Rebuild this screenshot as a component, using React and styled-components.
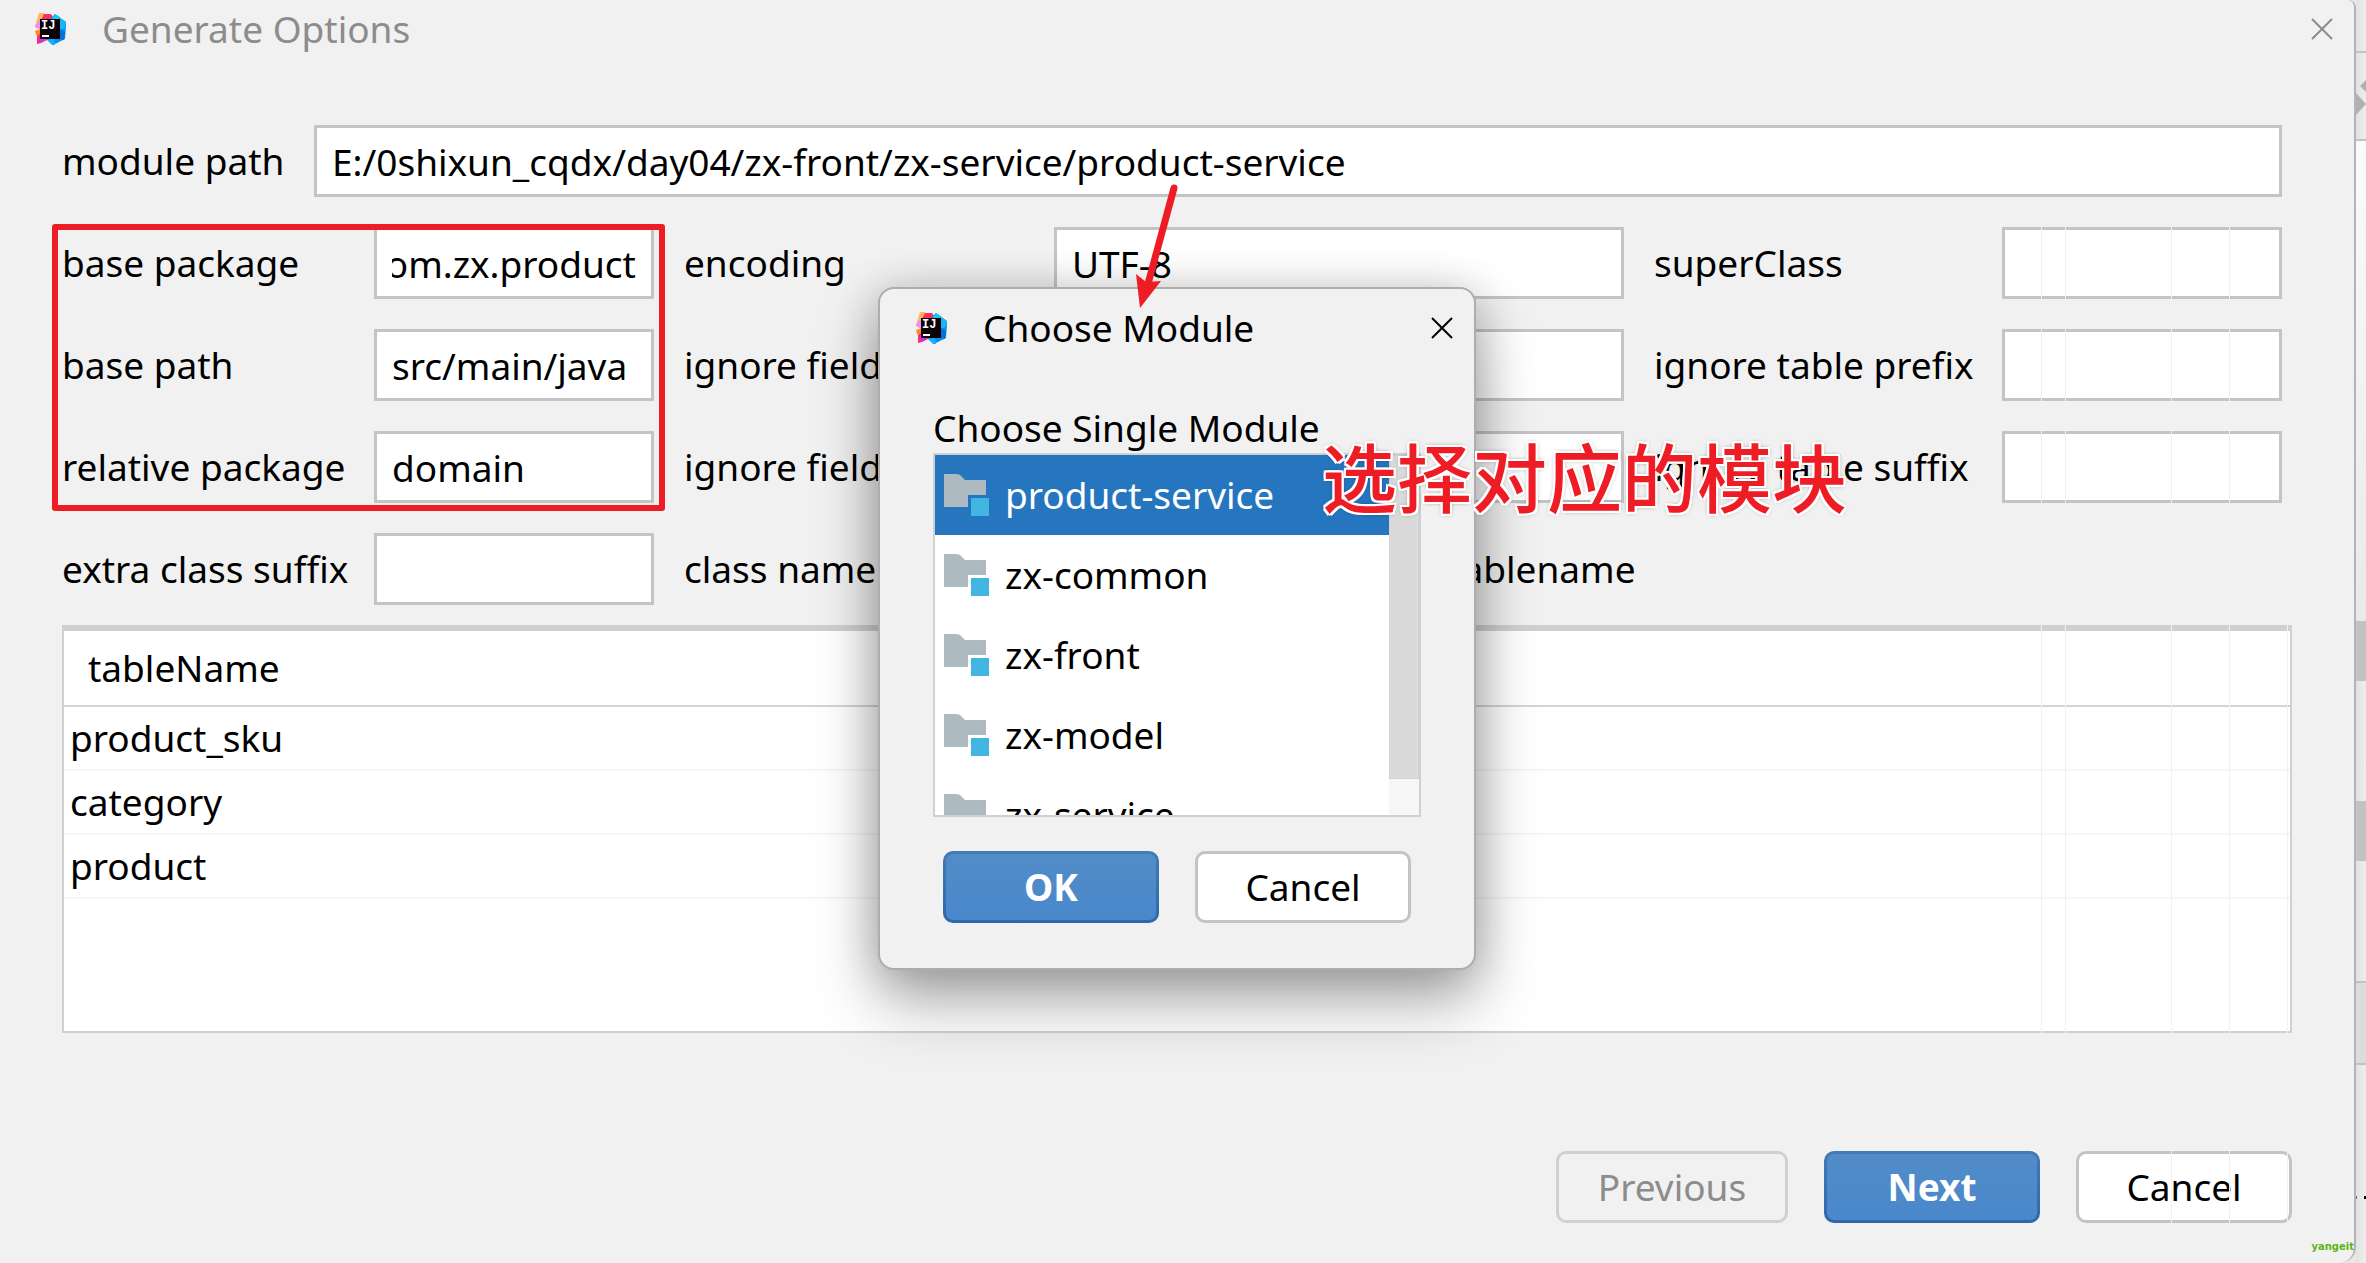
import React, { useEffect, useRef, useState } from 'react';
import styled, { createGlobalStyle, css } from 'styled-components';

const GlobalStyle = createGlobalStyle`
  * {
    box-sizing: border-box;
  }

  body {
    margin: 0;
    background-color: #f1f1f1;
    color: #000;
    font-family: "Noto Sans", "Noto Sans CJK SC", sans-serif;
    font-size: 37px;
    line-height: 50px;
    overflow: hidden;
  }

  button, input {
    font: inherit;
    color: inherit;
  }
`;

const Desktop = styled.div`
  display: flex;
  min-height: 100vh;
  background-color: #e8e8e8;
`;

const Window = styled.main`
  position: relative;
  flex: 1;
  min-width: 0;
  display: flex;
  flex-direction: column;
  background-color: #f1f1f1;
  border-right: 2px solid #b4b4b4;
  border-radius: 0 8px 16px 0;
`;

const TitleBar = styled.header`
  display: flex;
  align-items: center;
  gap: 35px;
  height: ${({ $dialog }) => ($dialog ? '78px' : '58px')};
  padding: 0 20px 0 ${({ $dialog }) => ($dialog ? '36px' : '35px')};
`;

const Title = styled.h1`
  flex: 1;
  margin: 0;
  font-size: 37px;
  font-weight: 400;
  color: ${({ $muted }) => ($muted ? '#8c8c8c' : '#000')};
`;

const CloseButton = styled.button`
  display: flex;
  padding: 0;
  border: none;
  background: none;
  color: ${({ $muted }) => ($muted ? '#8c8c8c' : '#000')};
  cursor: pointer;
`;

const Content = styled.form`
  flex: 1;
  display: flex;
  flex-direction: column;
  padding: 67px 62px 40px 62px;
`;

const PathRow = styled.div`
  display: flex;
  align-items: center;
  margin: 0 10px 30px 0;
`;

const FieldGrid = styled.div`
  position: relative;
  display: grid;
  grid-template-columns: 312px 280fr 400px 570fr 378px 280fr;
  row-gap: 30px;
  align-items: center;
  margin: 0 10px 20px 0;
`;

const PathLabel = styled.label`
  width: 252px;
`;

const FieldLabel = styled.label`
  padding-left: ${({ $inner }) => ($inner ? '30px' : '0')};
  white-space: nowrap;
`;

const TextInput = styled.input`
  width: 100%;
  min-width: 0;
  height: 72px;
  padding: 0 15px;
  border: 3px solid #c4c4c4;
  border-radius: 0;
  background-color: #fff;
  outline: none;
`;

const PathInput = styled(TextInput)`
  flex: 1;
`;

const Strategy = styled.div`
  grid-column: span 2;
  display: flex;
  gap: 40px;
  padding-left: 20px;
  white-space: nowrap;
`;

const RadioLabel = styled.label`
  display: flex;
  align-items: center;
  gap: 12px;

  input {
    width: 28px;
    height: 28px;
    margin: 0;
  }
`;

// red frame drawn over the first three rows of the left pair of columns
const Highlight = styled.div`
  position: absolute;
  grid-area: 1 / 1 / 4 / 3;
  inset: -3px -11px -8px -10px;
  border: 6px solid #ee1c25;
  border-radius: 3px;
  pointer-events: none;
`;

const TablePanel = styled.div`
  flex: 1;
  border: 2px solid #d0d0d0;
  border-top-width: 6px;
  background-color: #fff;
`;

const Table = styled.table`
  width: 100%;
  border-collapse: collapse;

  th {
    height: 75px;
    padding: 0 24px;
    border-bottom: 2px solid #d4d4d4;
    font-weight: 400;
    text-align: left;
  }

  td {
    height: 64px;
    padding: 0 6px;
    border-bottom: 2px solid #f6f6f6;
  }
`;

const Actions = styled.div`
  display: flex;
  justify-content: flex-end;
  gap: 36px;
  margin-top: ${({ $dialog }) => ($dialog ? '34px' : '118px')};
  padding: 0 ${({ $dialog }) => ($dialog ? '10px' : '0')};
`;

const Button = styled.button`
  height: 72px;
  width: ${({ $wide }) => ($wide ? '232px' : '216px')};
  border: 3px solid #c4c4c4;
  border-radius: 10px;
  background-color: #fff;
  cursor: pointer;

  &:disabled {
    border-color: #d0d0d0;
    background-color: transparent;
    color: #8c8c8c;
  }

  ${({ $primary }) =>
    $primary &&
    css`
      border-color: transparent;
      background: linear-gradient(#528cc8, #4988cc) padding-box, linear-gradient(#437bb5, #3067ab) border-box;
      color: #fff;
      font-weight: 700;
    `}
`;

const Seams = styled.div`
  position: absolute;
  top: 227px;
  right: 66px;
  bottom: 40px;
  display: grid;
  grid-template-columns: 24px 106px 58px 58px 1px;
  pointer-events: none;

  i {
    border-left: 1px solid #f1f1f1;
  }
`;

const Overlay = styled.div`
  position: absolute;
  inset: 0;
  display: flex;
  justify-content: center;
  align-items: flex-start;
  padding-top: 287px;
`;

const Dialog = styled.section`
  position: relative;
  width: 598px;
  padding-bottom: 45px;
  border: 2px solid #adadad;
  border-radius: 16px;
  background-color: #f1f1f1;
  background-clip: padding-box;
  box-shadow: 0 32px 64px rgba(0, 0, 0, 0.32), 0 4px 44px rgba(0, 0, 0, 0.2);
`;

const DialogBody = styled.div`
  padding: 36px 53px 0 53px;
`;

const ListTitle = styled.h2`
  margin: 0;
  font-size: 37px;
  font-weight: 400;
`;

const ListFrame = styled.div`
  display: flex;
  height: 364px;
  border: 2px solid #d0d0d0;
  background-color: #fff;
  overflow: hidden;
`;

const List = styled.ul`
  flex: 1;
  margin: 0;
  padding: 0;
  list-style: none;
`;

const ListItem = styled.li`
  display: flex;
  align-items: center;
  gap: 15px;
  height: 80px;
  padding-left: 9px;
  background-color: ${({ $selected }) => ($selected ? '#2675bf' : '#fff')};
  color: ${({ $selected }) => ($selected ? '#fff' : '#000')};
  cursor: default;
`;

const ScrollTrack = styled.div`
  width: 30px;
  background-color: #f6f6f6;
`;

const ScrollThumb = styled.div`
  height: 90%;
  border: 1px solid #d2d2d2;
  background-color: #dadada;
`;

const Arrow = styled.svg`
  position: absolute;
  top: -109px;
  left: 250px;
`;

const Note = styled.p`
  position: absolute;
  top: 132px;
  left: 442px;
  margin: 0;
  font-family: "Noto Sans CJK SC", sans-serif;
  font-size: 75px;
  font-weight: 500;
  line-height: 108px;
  white-space: nowrap;
  color: #ee1c25;
  text-shadow: 2px 0 #fff, -2px 0 #fff, 0 2px #fff, 0 -2px #fff, 2px 2px #fff, -2px 2px #fff,
    2px -2px #fff, -2px -2px #fff, 0 0 5px rgba(0, 0, 0, 0.6);
`;

const Watermark = styled.span`
  position: absolute;
  right: 0;
  bottom: 9px;
  font-family: "DejaVu Sans", sans-serif;
  font-size: 10px;
  font-weight: 700;
  line-height: 14px;
  color: #5cb417;
`;

const Edge = styled.aside`
  width: 10px;
  display: flex;
  flex-direction: column;
  background: linear-gradient(90deg, #e2e2e2, #eeeeee);
`;

const EdgeBlock = styled.div`
  height: ${({ $height }) => $height};
  background: ${({ $fill }) => $fill || 'none'};
  border-bottom: ${({ $line }) => ($line ? '2px solid #c2c2c2' : 'none')};

  svg {
    display: block;
  }
`;

const IdeaLogo = () => (
  <svg width="32" height="33" viewBox="0 0 32 33" aria-hidden="true">
    <path d="M4 0l5 0 2 8-8 6-2-4z" fill="#fdb55e" />
    <path d="M9 1h7l4 6-12 3-2-3z" fill="#fe2d63" />
    <path d="M0 12l6-6v11l-6-3z" fill="#f98be0" />
    <path d="M0 18l6-2v8l-5-2z" fill="#ff8a14" />
    <path d="M2 23l4-3 14 6-8 1-6 3-4 1z" fill="#fb2a7c" />
    <path d="M4 25l8 1-7 4z" fill="#d22af0" />
    <path d="M15 6l5-5 4 3 7 5v4l-1 13-4 2-8 4-6-6z" fill="#0a8cf5" />
    <path d="M20 1l5 3-1 4-8-1z" fill="#16c9f2" />
    <path d="M25 5l6 4-1 6-5 2z" fill="#19b6f6" />
    <path d="M25 16l5 3-1 8-4-1z" fill="#086fd6" />
    <path d="M12 27l7-1 1 6-3 0z" fill="#10b4f4" />
    <path d="M5 6h20v20h-20z" fill="#0c0306" />
    <path d="M7 22h7v2h-7z" fill="#fff" />
    <text x="6" y="16" fill="#fff" fontFamily="Liberation Mono" fontSize="12" fontWeight="700">
      IJ
    </text>
  </svg>
);

const ModuleIcon = () => (
  <svg width="46" height="42" viewBox="0 0 46 42" aria-hidden="true">
    <path d="M0 0h12q4 0 6 3l3 3h21v15h-18v12h-24z" fill="#aebac1" />
    <path d="M27 24h18v18h-18z" fill="#40b6e0" />
  </svg>
);

const CloseIcon = () => (
  <svg width="24" height="24" viewBox="0 0 24 24" fill="none" stroke="currentColor" strokeWidth="2" aria-hidden="true">
    <path d="M2 2l20 20M22 2l-20 20" />
  </svg>
);

const MODULES = ['product-service', 'zx-common', 'zx-front', 'zx-model', 'zx-service'];
const TABLES = ['product_sku', 'category', 'product'];

const FIELDS = [
  { id: 'basePackage', label: 'base package', value: 'com.zx.product' },
  { id: 'encoding', label: 'encoding', value: 'UTF-8' },
  { id: 'superClass', label: 'superClass', value: '' },
  { id: 'basePath', label: 'base path', value: 'src/main/java' },
  { id: 'fieldPrefix', label: 'ignore field prefix', value: '' },
  { id: 'tablePrefix', label: 'ignore table prefix', value: '' },
  { id: 'relativePackage', label: 'relative package', value: 'domain' },
  { id: 'fieldSuffix', label: 'ignore field suffix', value: '' },
  { id: 'tableSuffix', label: 'ignore table suffix', value: '' },
  { id: 'classSuffix', label: 'extra class suffix', value: '' },
];

const Field = ({ id, label, value, inner }) => {
  const input = useRef(null);

  // keep the end of a long value in view
  useEffect(() => {
    input.current.scrollLeft = input.current.scrollWidth;
  }, []);

  return (
    <>
      <FieldLabel htmlFor={id} $inner={inner}>{label}</FieldLabel>
      <TextInput ref={input} id={id} type="text" defaultValue={value} />
    </>
  );
};

const ChooseModule = () => {
  const [selected, setSelected] = useState('product-service');

  return (
    <Overlay>
      <Dialog role="dialog" aria-labelledby="chooseModule">
        <TitleBar $dialog>
          <IdeaLogo />
          <Title id="chooseModule">Choose Module</Title>
          <CloseButton type="button" aria-label="Close dialog"><CloseIcon /></CloseButton>
        </TitleBar>
        <DialogBody>
          <ListTitle id="moduleList">Choose Single Module</ListTitle>
          <ListFrame>
            <List role="listbox" aria-labelledby="moduleList">
              {MODULES.map((name) => (
                <ListItem
                  key={name}
                  role="option"
                  aria-selected={name === selected}
                  $selected={name === selected}
                  onClick={() => setSelected(name)}
                >
                  <ModuleIcon />
                  {name}
                </ListItem>
              ))}
            </List>
            <ScrollTrack>
              <ScrollThumb />
            </ScrollTrack>
          </ListFrame>
          <Actions $dialog>
            <Button type="button" $primary>OK</Button>
            <Button type="button">Cancel</Button>
          </Actions>
        </DialogBody>
        <Arrow width="50" height="130" viewBox="0 0 50 130" aria-hidden="true">
          <path d="M44 8l-26 96" stroke="#ee1c25" strokeWidth="7" strokeLinecap="round" />
          <path d="M6 94l10 8 15-1-21 27z" fill="#ee1c25" />
        </Arrow>
        <Note>选择对应的模块</Note>
      </Dialog>
    </Overlay>
  );
};

const App = () => {
  return (
    <Desktop>
      <GlobalStyle />
      <Window>
        <TitleBar>
          <IdeaLogo />
          <Title $muted>Generate Options</Title>
          <CloseButton type="button" aria-label="Close" $muted><CloseIcon /></CloseButton>
        </TitleBar>
        <Content onSubmit={(e) => e.preventDefault()}>
          <PathRow>
            <PathLabel htmlFor="modulePath">module path</PathLabel>
            <PathInput
              id="modulePath"
              type="text"
              defaultValue="E:/0shixun_cqdx/day04/zx-front/zx-service/product-service"
            />
          </PathRow>
          <FieldGrid>
            {FIELDS.map((field, index) => (
              <Field key={field.id} {...field} inner={index % 3 !== 0} />
            ))}
            <FieldLabel as="span" $inner>class name strategy</FieldLabel>
            <Strategy>
              <RadioLabel><input type="radio" name="strategy" defaultChecked />camel</RadioLabel>
              <RadioLabel><input type="radio" name="strategy" />same as tablename</RadioLabel>
            </Strategy>
            <Highlight />
          </FieldGrid>
          <TablePanel>
            <Table>
              <thead>
                <tr><th>tableName</th></tr>
              </thead>
              <tbody>
                {TABLES.map((name) => (
                  <tr key={name}><td>{name}</td></tr>
                ))}
              </tbody>
            </Table>
          </TablePanel>
          <Actions>
            <Button type="button" $wide disabled>Previous</Button>
            <Button type="submit" $primary>Next</Button>
            <Button type="button">Cancel</Button>
          </Actions>
        </Content>
        <Seams><i /><i /><i /><i /><i /></Seams>
        <ChooseModule />
        <Watermark>yangeit</Watermark>
      </Window>
      <Edge>
        <EdgeBlock $height="53px" $line />
        <EdgeBlock $height="88px" $line>
          <svg width="10" height="80" viewBox="0 0 10 80" aria-hidden="true">
            <path d="M10 27v12l-6-6zM0 40l10 11-10 11z" fill="#b0b0b0" />
          </svg>
        </EdgeBlock>
        <EdgeBlock $height="480px" $fill="linear-gradient(#fbfbfb, #e9e9e9)" />
        <EdgeBlock $height="60px" $fill="#c2c2c2" />
        <EdgeBlock $height="120px" />
        <EdgeBlock $height="60px" $fill="#c2c2c2" />
        <EdgeBlock $height="122px" $line />
        <EdgeBlock $height="82px" $fill="#dcdcdc" $line />
        <EdgeBlock $height="198px">
          <svg width="10" height="140" viewBox="0 0 10 140" aria-hidden="true">
            <path d="M0 131h1v3h-1z" fill="#2675bf" />
            <path d="M8 131h2v3h-2z" fill="#000" />
          </svg>
        </EdgeBlock>
      </Edge>
    </Desktop>
  );
};

export default App;
